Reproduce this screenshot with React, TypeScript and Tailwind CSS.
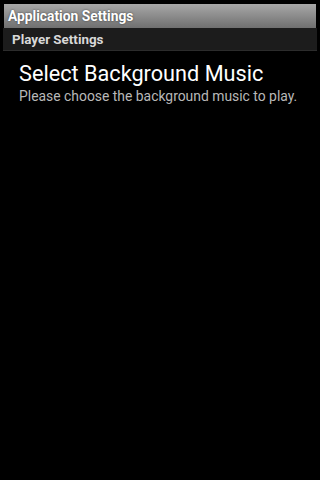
export default function App() {
  return (
    <div className="min-h-[480px] w-[320px] bg-black font-['Roboto',sans-serif] pt-[4px]">
      <div className="mx-[4px] h-[24px] flex items-center pl-[4px] pt-[2px] bg-gradient-to-b from-[#a8a8a8] to-[#707070]">
        <span className="text-[13.8px] font-bold text-white leading-none [text-shadow:0_0_2px_rgba(0,0,0,0.6)]">
          Application Settings
        </span>
      </div>
      <div className="ml-[3px] mr-[3px] h-[23px] flex items-center pl-[9px] pt-[2px] bg-[#1c1c1c] border-b border-[#2c2c2c]">
        <span className="text-[13.4px] font-bold text-[#d8d8d8] leading-none">Player Settings</span>
      </div>
      <div className="pl-[19px] pt-[10px]">
        <div className="text-[21.7px] text-white leading-[26px]">Select Background Music</div>
        <div className="text-[13.9px] text-[#b8b8b8] leading-[18px]">
          Please choose the background music to play.
        </div>
      </div>
    </div>
  );
}
